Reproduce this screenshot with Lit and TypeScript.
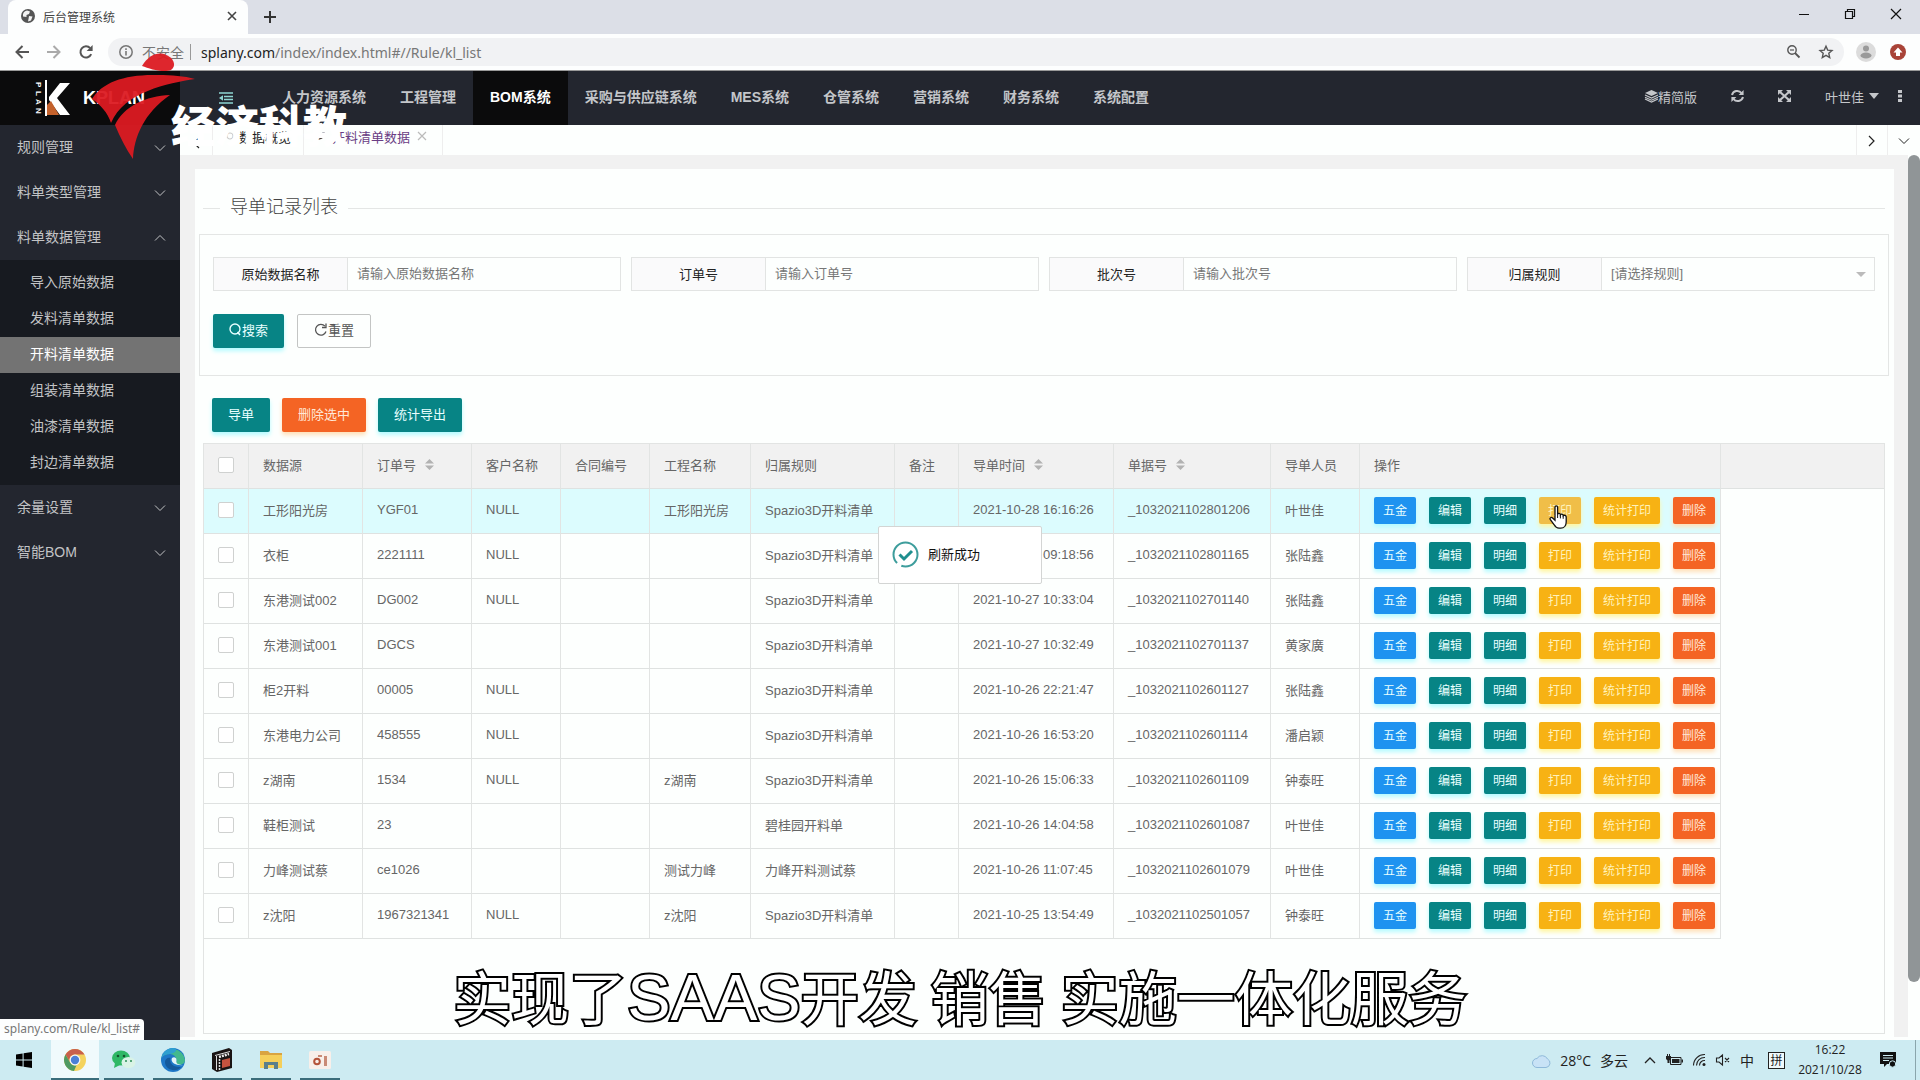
import { LitElement, html, svg, css, nothing } from "lit";
import { customElement, state } from "lit/decorators.js";
import { classMap } from "lit/directives/class-map.js";

interface Row {
  source: string;
  order: string;
  client: string;
  project: string;
  rule: string;
  time: string;
  bill: string;
  person: string;
}

const row = (
  source: string,
  order: string,
  client: string,
  project: string,
  rule: string,
  time: string,
  bill: string,
  person: string
): Row => ({ source, order, client, project, rule, time, bill, person });

const SPAZIO = "Spazio3D开料清单";

const ROWS: Row[] = [
  row("工形阳光房", "YGF01", "NULL", "工形阳光房", SPAZIO, "2021-10-28 16:16:26", "_1032021102801206", "叶世佳"),
  row("衣柜", "2221111", "NULL", "", SPAZIO, "2021-10-28 09:18:56", "_1032021102801165", "张陆鑫"),
  row("东港测试002", "DG002", "NULL", "", SPAZIO, "2021-10-27 10:33:04", "_1032021102701140", "张陆鑫"),
  row("东港测试001", "DGCS", "", "", SPAZIO, "2021-10-27 10:32:49", "_1032021102701137", "黄家廣"),
  row("柜2开料", "00005", "NULL", "", SPAZIO, "2021-10-26 22:21:47", "_1032021102601127", "张陆鑫"),
  row("东港电力公司", "458555", "NULL", "", SPAZIO, "2021-10-26 16:53:20", "_1032021102601114", "潘启颖"),
  row("z湖南", "1534", "NULL", "z湖南", SPAZIO, "2021-10-26 15:06:33", "_1032021102601109", "钟泰旺"),
  row("鞋柜测试", "23", "", "", "碧桂园开料单", "2021-10-26 14:04:58", "_1032021102601087", "叶世佳"),
  row("力峰测试蔡", "ce1026", "", "测试力峰", "力峰开料测试蔡", "2021-10-26 11:07:45", "_1032021102601079", "叶世佳"),
  row("z沈阳", "1967321341", "NULL", "z沈阳", SPAZIO, "2021-10-25 13:54:49", "_1032021102501057", "钟泰旺"),
];

const COLUMNS: { label: string; cls: string; sort?: boolean }[] = [
  { label: "数据源", cls: "c-source" },
  { label: "订单号", cls: "c-order", sort: true },
  { label: "客户名称", cls: "c-name" },
  { label: "合同编号", cls: "c-name" },
  { label: "工程名称", cls: "c-project" },
  { label: "归属规则", cls: "c-rule" },
  { label: "备注", cls: "c-note" },
  { label: "导单时间", cls: "c-time", sort: true },
  { label: "单据号", cls: "c-bill", sort: true },
  { label: "导单人员", cls: "c-name" },
  { label: "操作", cls: "c-ops" },
];

const OPS: [string, string][] = [
  ["五金", "blue"],
  ["编辑", "teal"],
  ["明细", "teal"],
  ["打印", "amber"],
  ["统计打印", "amber"],
  ["删除", "red"],
];

const NAV = ["人力资源系统", "工程管理", "BOM系统", "采购与供应链系统", "MES系统", "仓管系统", "营销系统", "财务系统", "系统配置"];

const SUBMENU = ["导入原始数据", "发料清单数据", "开料清单数据", "组装清单数据", "油漆清单数据", "封边清单数据"];

const FIELDS: [string, string, string][] = [
  ["f-source", "原始数据名称", "请输入原始数据名称"],
  ["f-order", "订单号", "请输入订单号"],
  ["f-batch", "批次号", "请输入批次号"],
];

const icon = (w: number, h: number, body: unknown) =>
  html`<svg width=${w} height=${h} viewBox="0 0 ${w} ${h}" fill="none" aria-hidden="true">${body}</svg>`;

const line = (d: string, width = 1) => svg`<path d=${d} stroke="currentColor" stroke-width=${width} />`;
const fill = (d: string, color = "currentColor") => svg`<path d=${d} fill=${color} />`;

const chevronDown = icon(12, 12, line("M1 3.5L6 8.5L11 3.5"));
const chevronUp = icon(12, 12, line("M1 8.5L6 3.5L11 8.5"));

@customElement("app-root")
export class AppRoot extends LitElement {
  @state() private checked = new Set<number>();

  static styles = css`
    :host {
      display: block;
      font-family: "Liberation Sans", "Noto Sans CJK SC", sans-serif;
      font-size: 13px;
      color: #666;
    }
    * { box-sizing: border-box; }
    svg { display: block; flex: none; overflow: visible; }
    a { color: inherit; text-decoration: none; }
    button { font: inherit; color: inherit; border: 0; background: none; padding: 0; margin: 0; }
    ul { list-style: none; margin: 0; padding: 0; }
    .screen { position: relative; display: flex; flex-direction: column; min-height: 100vh; background: #fff; }

    /* browser frame */
    .strip { display: flex; height: 34px; background: #dcdfe7; padding: 0 18px 0 8px; align-items: stretch; }
    .tab { width: 240px; background: #fdfefe; border-radius: 8px 8px 0 0; display: flex; align-items: center; gap: 8px; padding: 0 10px 2px 13px; font-size: 12px; color: #444; }
    .tab-title { flex: 1; }
    .new-tab { display: flex; align-items: center; padding: 0 16px 0; color: #333; }
    .win { margin-left: auto; display: flex; align-items: center; gap: 34px; padding-bottom: 6px; color: #111; }
    .bar { display: flex; align-items: center; height: 36px; padding: 0 14px 0 15px; background: #fdfefe; color: #555; }
    .bar-nav { display: flex; gap: 18px; padding-right: 15px; }
    .bar-nav .off { color: #aaa; }
    .omni { flex: 1; display: flex; align-items: center; height: 28px; border-radius: 14px; background: #f1f2f4; padding: 0 11px; font: 14px "Noto Sans", "Noto Sans CJK SC", sans-serif; color: #777; }
    .safe { padding: 0 6px 0 9px; }
    .omni-line { width: 1px; height: 16px; background: #999; margin-right: 10px; }
    .host { color: #222; }
    .omni-end { margin-left: auto; display: flex; gap: 19px; color: #555; }
    .bar-end { display: flex; gap: 14px; padding-left: 12px; align-items: center; }

    /* application header */
    .top { display: flex; height: 55px; background: #23262f; border-top: 1px solid #999; color: #c4c6ca; align-items: stretch; }
    .brand { width: 180px; background: #0b0b0c; display: flex; align-items: center; gap: 11px; padding-left: 34px; color: #fff; font-size: 18px; font-weight: bold; }
    .brand-mark { font: bold 8px "Liberation Sans", sans-serif; }
    .toggle { display: flex; align-items: center; padding: 0 32px 0 39px; color: #8fd6d3; }
    .nav { display: flex; font-size: 14px; font-weight: bold; }
    .nav a { display: flex; align-items: center; padding: 0 17px 4px; white-space: nowrap; }
    .nav .on { background: #0b0b0c; color: #fff; }
    .tools { margin-left: auto; display: flex; align-items: center; gap: 34px; padding: 0 18px 4px 0; }
    .tools button { display: flex; align-items: center; }
    .tools .user { gap: 5px; }
    .tools .more { margin-left: -15px; }

    /* sidebar */
    .body { flex: 1; display: flex; align-items: stretch; }
    .side { width: 180px; flex: none; background: #23262f; color: #c2c3c5; font-size: 14px; }
    .group { display: flex; width: 100%; height: 45px; align-items: center; justify-content: space-between; padding: 0 14px 4px 17px; }
    .group svg { margin-top: 4px; }
    .sub { background: #171a20; padding: 5px 0 4px; }
    .sub a { display: flex; height: 36px; align-items: center; padding: 0 0 4px 30px; }
    .sub .on { background: #737373; color: #fff; }

    /* page tabs */
    .main { flex: 1; min-width: 0; display: flex; flex-direction: column; }
    .tabs { display: flex; height: 30px; background: #fdfffe; color: #222; }
    .tabs > * { display: flex; align-items: center; border-right: 1px solid #eee; }
    .tabs .prev { width: 33px; justify-content: center; padding-top: 6px; }
    .tabs .page { padding: 0 12px 8px 13px; gap: 6px; }
    .tabs .current { color: #6a3d84; padding-right: 16px; }
    .tabs .current .x { margin-left: 2px; color: #bbb; }
    .tabs .next { width: 32px; justify-content: center; border-left: 1px solid #eee; margin-left: auto; padding-top: 2px; }
    .tabs .menu { width: 32px; justify-content: center; border: 0; padding-top: 2px; }

    .frame { flex: 1; display: flex; background: #fdfffe; }
    .content { flex: 1; min-width: 0; display: flex; background: #f1f1f1; padding: 14px 14px 0 15px; margin-bottom: 3px; }
    .card { flex: 1; min-width: 0; display: flex; flex-direction: column; background: #fdfffe; margin-bottom: -3px; padding: 24px 5px 6px 4px; }
    .scroll { width: 12px; padding-bottom: 58px; display: flex; }
    .thumb { flex: 1; background: #909597; border-radius: 6px; }

    .title { display: flex; align-items: center; gap: 10px; margin: 0 4px 12px; height: 30px; font-size: 18px; line-height: 26px; font-weight: 300; color: #444; }
    .title span { padding-bottom: 3px; }
    .title::before, .title::after { content: ""; height: 1px; background: #e4e6e5; width: 17px; }
    .title::after { flex: 1; }
    .panel { border: 1px solid #e4e6e5; padding: 22px 13px 27px; display: flex; flex-direction: column; gap: 23px; margin-top: -1px; }
    .fields { display: grid; grid-template-columns: repeat(4, 1fr); gap: 10px; }
    .field { display: flex; height: 34px; border: 1px solid #e2e4e3; }
    .field label { width: 134px; flex: none; display: flex; align-items: center; justify-content: center; padding-bottom: 2px; background: #fafafb; border-right: 1px solid #e2e4e3; color: #222; }
    .field input, .field select { flex: 1; min-width: 0; border: 0; outline: 0; background: transparent; font: inherit; padding: 0 9px 2px; color: #777; appearance: none; }
    .field input::placeholder { color: #777; opacity: 1; }
    .pick { flex: 1; min-width: 0; display: flex; align-items: center; padding-right: 8px; color: #bbb; }
    .pick select { height: 100%; }

    .row-btns { display: flex; gap: 13px; }
    .btn { display: flex; align-items: center; justify-content: center; height: 34px; padding: 0 16px 3px; border-radius: 2px; color: #e8ffff; white-space: nowrap; }
    .plain { border: 1px solid #c3c5c4; color: #555; }
    .teal { background: #078485; box-shadow: 0 3px 4px #b4fbff; }
    .red { background: #f46424; box-shadow: 0 3px 4px #ffe0b8; color: #ffe9d8; }
    .blue { background: #1e93f0; box-shadow: 0 3px 4px #b4fbff; }
    .amber { background: #f7b214; box-shadow: 0 3px 4px #fff6a0; color: #fff3bd; }
    .actions { display: flex; gap: 12px; padding: 22px 13px 11px; }

    /* table */
    .grid { flex: 1; margin: 0 4px; border: 1px solid #e2e4e3; }
    table { width: 100%; table-layout: fixed; border-collapse: separate; border-spacing: 0; }
    th, td { height: 45px; padding: 0 0 3px 14px; border-right: 1px solid #e2e4e3; border-bottom: 1px solid #dfe2e1; text-align: left; font-weight: normal; white-space: nowrap; }
    .cell-ops { padding-bottom: 1px; }
    th { background: #f1f1f1; }
    th:last-child { border-right: 0; }
    td:last-child { border: 0; background: #fdfffe; }
    .hover td { background: #dcfcfe; }
    .hover td:last-child { background: #fdfffe; }
    .c-check { width: 45px; }
    .c-source { width: 114px; }
    .c-order { width: 109px; }
    .c-name { width: 89px; }
    .c-project { width: 101px; }
    .c-rule { width: 144px; }
    .c-note { width: 64px; }
    .c-time { width: 155px; }
    .c-bill { width: 157px; }
    .c-ops { width: 361px; }
    .th { display: flex; align-items: center; gap: 9px; color: #b2b2b2; }
    .th span { color: #666; }
    input[type="checkbox"] { appearance: none; display: block; width: 16px; height: 16px; margin: 0; border: 1px solid #cfd1d0; border-radius: 2px; background: #fff; }
    input[type="checkbox"]:checked { background: #078485; }
    .ops { display: flex; gap: 13px; }
    .op { position: relative; height: 27px; padding: 0 9px 2px; border-radius: 2px; font-size: 12px; color: #e8ffff; }
    .op.amber { color: #fff3bd; }
    .op.red { color: #ffe9d8; }
    .op.over { background: #f0be48; }
    .hand { position: absolute; left: 10px; top: 8px; z-index: 2; }

    /* layers over the page */
    .toast { position: absolute; left: 50%; top: 526px; transform: translateX(-50%); width: 164px; height: 58px; display: flex; align-items: center; gap: 9px; padding: 0 0 2px 13px; background: #fff; border: 1px solid #d3d5d4; border-radius: 2px; color: #111; }
    .toast span { padding-bottom: 2px; }
    .caption { position: absolute; left: 0; right: 0; bottom: 37px; display: flex; justify-content: center; align-items: baseline; gap: 14px; margin: 0; font-size: 58px; line-height: 86px; color: #fff; white-space: nowrap; -webkit-text-stroke: 4px #000; paint-order: stroke fill; }
    .latin { font-size: 65px; }
    .station { position: absolute; left: 90px; top: 52px; }
    .station-name { position: absolute; left: 171px; top: 94px; font: 900 44px/60px "Noto Sans CJK SC", sans-serif; color: #fff; white-space: nowrap; }
    .status { position: absolute; left: 0; bottom: 40px; height: 21px; padding: 0 4px; background: #fdfefe; border-radius: 0 4px 0 0; font: 12px/20px "Noto Sans", sans-serif; color: #777; }

    /* desktop bar */
    .task { display: flex; height: 40px; background: #cdebf2; color: #222; font-family: "Open Sans", "Noto Sans CJK SC", sans-serif; font-size: 14px; }
    .apps { display: flex; gap: 9px; }
    .apps button { width: 40px; display: flex; align-items: center; justify-content: center; border-bottom: 2px solid #3b6d7b; padding-top: 2px; }
    .apps .start { width: 42px; border-color: transparent; padding-left: 6px; }
    .apps .live { width: 48px; background: #f0fafc; margin-right: -4px; }
    .tray { margin-left: auto; display: flex; align-items: center; padding-right: 4px; }
    .weather { display: flex; align-items: center; gap: 9px; padding-right: 16px; }
    .sys { display: flex; align-items: center; gap: 10px; }
    .ime { width: 17px; height: 17px; border: 1px solid #222; font-size: 12px; line-height: 15px; text-align: center; margin-left: 4px; background: #f0fafc; }
    .clock { width: 68px; margin: 0 16px 0 11px; font-size: 12px; line-height: 20px; text-align: center; }
    .edge { width: 1px; height: 40px; background: #8aa5ac; margin-left: 19px; }
  `;

  private toggle(i: number) {
    const next = new Set(this.checked);
    next.has(i) ? next.delete(i) : next.add(i);
    this.checked = next;
  }

  private browser() {
    return html`
      <div class="strip">
        <div class="tab">
          ${icon(14, 14, svg`<circle cx="7" cy="7" r="7" fill="#555" /><path d="M6 1.5L9 2.5L8 5L5.5 6L5.5 8L2 7.5C1.5 4 3 2 6 1.5ZM8 7L11.5 7.5L10 11.5L7 12.5L7.5 10Z" fill="#f3f3f3" />`)}
          <span class="tab-title">后台管理系统</span>
          <button aria-label="关闭标签页">${icon(12, 12, line("M2 2L10 10M10 2L2 10", 1.6))}</button>
        </div>
        <button class="new-tab" aria-label="新标签页">${icon(12, 12, line("M6 0V12M0 6H12", 2))}</button>
        <div class="win">
          <button aria-label="最小化">${icon(12, 12, line("M1 6.5H11"))}</button>
          <button aria-label="还原">${icon(12, 12, line("M1.5 3.5H8.5V10.5H1.5ZM3.5 3.5V1.5H10.5V8.5H8.5", 1.2))}</button>
          <button aria-label="关闭">${icon(12, 12, line("M1 1L11 11M11 1L1 11", 1.2))}</button>
        </div>
      </div>
      <div class="bar">
        <div class="bar-nav">
          <button aria-label="后退">${icon(14, 14, line("M14 7H2M7.5 1L1.5 7L7.5 13", 2))}</button>
          <button class="off" aria-label="前进">${icon(14, 14, line("M0 7H12M6.5 1L12.5 7L6.5 13", 2))}</button>
          <button aria-label="重新加载">${icon(14, 14, svg`${line("M12.2 9.2A5.6 5.6 0 1 1 11.2 3.2", 2)}${fill("M13.6 0V6H7.6Z")}`)}</button>
        </div>
        <div class="omni">
          ${icon(14, 14, svg`<circle cx="7" cy="7" r="6.2" stroke="currentColor" stroke-width="1.5" />${line("M7 6V10.5M7 3.3V4.9", 1.6)}`)}
          <span class="safe">不安全</span><span class="omni-line"></span>
          <span><span class="host">splany.com</span>/index/index.html#//Rule/kl_list</span>
          <span class="omni-end">
            ${icon(13, 13, svg`<circle cx="5" cy="5" r="4.2" stroke="currentColor" stroke-width="1.4" />${line("M8 8L12.5 12.5", 1.8)}${line("M3 5H7", 1.2)}`)}
            ${icon(14, 14, line("M7 1.2L8.7 5.1L13 5.5L9.8 8.3L10.7 12.6L7 10.3L3.3 12.6L4.2 8.3L1 5.5L5.3 5.1Z", 1.4))}
          </span>
        </div>
        <div class="bar-end">
          ${icon(20, 20, svg`<circle cx="10" cy="10" r="10" fill="#dcdcdc" /><circle cx="10" cy="6.5" r="3" fill="#9a9a9a" /><ellipse cx="10" cy="13.5" rx="5.5" ry="3" fill="#9a9a9a" />`)}
          ${icon(16, 16, svg`<circle cx="8" cy="8" r="8" fill="#a94338" />${fill("M8 3.5L12.5 8.5H10V12H6V8.5H3.5Z", "#fff")}`)}
        </div>
      </div>`;
  }

  private header() {
    return html`
      <header class="top">
        <div class="brand">
          <svg class="brand-mark" width="38" height="38" viewBox="0 0 38 38" aria-hidden="true">
            <text transform="translate(2 3) rotate(90)" x="0" y="0" fill="#fff">P</text>
            <text transform="translate(2 12) rotate(90)" x="0" y="0" fill="#fff">L</text>
            <text transform="translate(2 20) rotate(90)" x="0" y="0" fill="#fff">A</text>
            <text transform="translate(2 29) rotate(90)" x="0" y="0" fill="#fff">N</text>
            <path d="M11 1H13V37H11Z" fill="#fff" />
            <path d="M26 4H36L23 19L36 36H26L15 21L15 18Z" fill="#fff" />
            <path d="M13 36V26L17 22L25 36Z" fill="#c4622c" />
          </svg>
          <span>KPLAN</span>
        </div>
        <button class="toggle" aria-label="侧边伸缩">
          ${icon(14, 12, svg`${line("M0 1H14M5 4.5H14M5 7.5H14M0 11H14", 1.6)}${fill("M0 6L4 3.3V8.7Z")}`)}
        </button>
        <nav class="nav">
          ${NAV.map((n) => html`<a href="#" class=${classMap({ on: n === "BOM系统" })}>${n}</a>`)}
        </nav>
        <div class="tools">
          <button>
            ${icon(13, 12, svg`${fill("M6.5 0L13 3L6.5 6L0 3Z")}${line("M0 5L6.5 8L13 5M0 7.2L6.5 10.2L13 7.2M0 9L6.5 12L13 9", 1.2)}`)}
            精简版
          </button>
          <button aria-label="刷新">
            ${icon(13, 12, svg`${line("M1 5A5.4 5.4 0 0 1 10.5 3M12 7A5.4 5.4 0 0 1 2.5 9", 2)}${fill("M12.6 0V5H7.6ZM.4 12V7H5.4Z")}`)}
          </button>
          <button aria-label="全屏">
            ${icon(13, 12, svg`${line("M2 2L11 10M11 2L2 10", 2.2)}${fill("M0 0H5L0 5ZM13 0V5L8 0ZM0 12V7L5 12ZM13 12H8L13 7Z")}`)}
          </button>
          <button class="user">叶世佳 ${icon(10, 6, fill("M0 0H10L5 6Z"))}</button>
          <button class="more" aria-label="更多">${icon(4, 12, fill("M0 0H4V3H0ZM0 4.5H4V7.5H0ZM0 9H4V12H0Z"))}</button>
        </div>
      </header>`;
  }

  private sidebar() {
    const group = (name: string, open = false) =>
      html`<button class="group" aria-expanded=${open}>${name}${open ? chevronUp : chevronDown}</button>`;
    return html`
      <aside class="side">
        ${group("规则管理")}${group("料单类型管理")}${group("料单数据管理", true)}
        <ul class="sub">
          ${SUBMENU.map((s) => html`<li><a href="#" class=${classMap({ on: s === "开料清单数据" })}>${s}</a></li>`)}
        </ul>
        ${group("余量设置")}${group("智能BOM")}
      </aside>`;
  }

  private search() {
    return html`
      <form class="panel" @submit=${(e: Event) => e.preventDefault()}>
        <div class="fields">
          ${FIELDS.map(
            ([id, label, hint]) => html`
              <div class="field"><label for=${id}>${label}</label><input id=${id} type="text" placeholder=${hint} /></div>`
          )}
          <div class="field">
            <label for="f-rule">归属规则</label>
            <div class="pick">
              <select id="f-rule"><option>[请选择规则]</option></select>
              ${icon(10, 5, fill("M0 0H10L5 5Z"))}
            </div>
          </div>
        </div>
        <div class="row-btns">
          <button class="btn teal">
            ${icon(13, 13, svg`<circle cx="6" cy="6" r="5" stroke="currentColor" stroke-width="1.4" />${line("M8.5 9L11 12", 1.6)}`)}搜索
          </button>
          <button class="btn plain" type="reset">
            ${icon(14, 13, svg`${line("M12 8.5A5.4 5.4 0 1 1 11 3.2", 1.3)}${line("M12 .5V4.5H8", 1.3)}`)}重置
          </button>
        </div>
      </form>`;
  }

  private hand() {
    return html`<svg class="hand" width="19" height="24" viewBox="0 0 19 24" aria-hidden="true">
      <path d="M6 2.2C6 .4 8.6 .4 8.6 2.2V9.3C9.2 7.9 11.3 8.2 11.4 9.8C12.2 8.6 14 9.1 14.2 10.6C15.4 9.8 17.2 10.4 17.2 12V17C17.2 20.5 15 23.2 11.8 23.2H10C7.6 23.2 6.2 21.6 5.2 19.8L1.2 14.4C.4 12.9 2.3 11.8 3.6 13L6 15.2Z" fill="#fff" stroke="#111" stroke-width="1.3" />
      <path d="M8.6 9V13M11.4 10V13.4M14.2 11V13.8" stroke="#111" stroke-width="1" />
    </svg>`;
  }

  private table() {
    return html`
      <div class="grid">
        <table>
          <colgroup>
            <col class="c-check" />
            ${COLUMNS.map((c) => html`<col class=${c.cls} />`)}
            <col />
          </colgroup>
          <thead>
            <tr>
              <th><input type="checkbox" aria-label="全选" /></th>
              ${COLUMNS.map(
                (c) => html`<th>
                  <div class="th"><span>${c.label}</span>${c.sort ? icon(9, 11, fill("M4.5 0L9 4.5H0ZM4.5 11L0 6.5H9Z")) : nothing}</div>
                </th>`
              )}
              <th></th>
            </tr>
          </thead>
          <tbody>
            ${ROWS.map(
              (r, i) => html`<tr class=${classMap({ hover: i === 0 })}>
                <td><input type="checkbox" aria-label=${r.source} .checked=${this.checked.has(i)} @change=${() => this.toggle(i)} /></td>
                <td>${r.source}</td>
                <td>${r.order}</td>
                <td>${r.client}</td>
                <td></td>
                <td>${r.project}</td>
                <td>${r.rule}</td>
                <td></td>
                <td>${r.time}</td>
                <td>${r.bill}</td>
                <td>${r.person}</td>
                <td class="cell-ops">
                  <div class="ops">
                    ${OPS.map(([label, tone], k) => {
                      const over = i === 0 && k === 3;
                      return html`<button class="op ${tone} ${over ? "over" : ""}">${label}${over ? this.hand() : nothing}</button>`;
                    })}
                  </div>
                </td>
                <td></td>
              </tr>`
            )}
          </tbody>
        </table>
      </div>`;
  }

  private taskbar() {
    return html`
      <footer class="task">
        <div class="apps">
          <button class="start" aria-label="开始">${icon(16, 16, fill("M0 2.4L6.6 1.5V7.5H0ZM7.6 1.3L16 0V7.5H7.6ZM0 8.5H6.6V14.5L0 13.6ZM7.6 8.5H16V16L7.6 14.7Z", "#000"))}</button>
          <button class="live" aria-label="Chrome">
            ${icon(24, 24, svg`<circle cx="12" cy="12" r="11" fill="#f4d35e" /><path d="M2.5 6.5A11 11 0 0 1 21.5 6.5H12A5.5 5.5 0 0 0 7 14.5Z" fill="#c8604c" /><path d="M2.5 6.5L7.2 14.7A5.5 5.5 0 0 0 13.5 17.3L11 23A11 11 0 0 1 2.5 6.5Z" fill="#4f9a62" /><circle cx="12" cy="12" r="5.4" fill="#f4f7f9" /><circle cx="12" cy="12" r="4.2" fill="#4b7fd6" />`)}
          </button>
          <button aria-label="微信">
            ${icon(24, 20, svg`<ellipse cx="9" cy="8" rx="9" ry="7.5" fill="#2fb866" />${fill("M3 13L2 18L8 15Z", "#2fb866")}<circle cx="6" cy="6" r="1.3" fill="#14532d" /><circle cx="12" cy="6" r="1.3" fill="#14532d" /><ellipse cx="16.5" cy="12.5" rx="7" ry="5.6" fill="#d9f3e6" /><circle cx="14" cy="11" r="1" fill="#2b8f57" /><circle cx="19" cy="11" r="1" fill="#2b8f57" />`)}
          </button>
          <button aria-label="Edge">
            ${icon(24, 24, svg`<circle cx="12" cy="12" r="12" fill="#1f78c8" /><path d="M.5 10A12 12 0 0 1 24 12C24 16 20 17.5 16 16.5C14 16 15.5 14 15.5 12A6.5 6.5 0 0 0 9 6C5 6 2 7.5 .5 10Z" fill="#43b98d" /><path d="M.5 10A12 12 0 0 1 14 .2C17 2 14 5 9 6C5 6 2 7.5 .5 10Z" fill="#2f9fd0" /><path d="M9.5 10C8 14 11 19.5 20 19C15 25 4 22 4 14C4 11 7 9 9.5 10Z" fill="#155a9c" /><path d="M15.5 12C15.5 9.5 13 8.5 11 10C9.5 13 12 17.5 22 17.2C14 16.5 15.5 14 15.5 12Z" fill="#e2f4f8" />`)}
          </button>
          <button aria-label="影视">
            ${icon(20, 24, svg`${fill("M0 5L17 0L20 2V20L5 24L0 21Z", "#1a1414")}<path d="M3 7.5L18 3.5M4.5 8V22" stroke="#ddd" stroke-width="1" /><path d="M7 9L17 6" stroke="#eee" stroke-width="2.5" stroke-dasharray="2 1" />${fill("M10 12L18 10V18L10 20Z", "#c4533f")}<path d="M7.5 11V22" stroke="#ddd" stroke-width="1.5" stroke-dasharray="2 1" />`)}
          </button>
          <button aria-label="文件资源管理器">
            ${icon(22, 18, svg`${fill("M0 0H8L10 2H22V17H0Z", "#d9a441")}${fill("M0 4H22V17H0Z", "#f5cf5a")}${fill("M4 18V11H18V18H14V14H8V18Z", "#5b7f8c")}`)}
          </button>
          <button aria-label="录屏">
            ${icon(22, 18, svg`<rect width="22" height="18" rx="1.5" fill="#f8efea" /><circle cx="8" cy="10.5" r="2.8" stroke="#b4533a" stroke-width="2" /><rect x="15" y="5" width="3" height="10" fill="#c98a76" /><rect x="9" y="4" width="4" height="2" fill="#c98a76" />`)}
          </button>
        </div>
        <div class="tray">
          <div class="weather">
            ${icon(19, 15, svg`<path d="M5 14.5H14A4.5 4.5 0 0 0 15.5 6A6 6 0 0 0 5 5.5A4.5 4.5 0 0 0 5 14.5Z" fill="#c8e2f6" stroke="#8fb9da" />`)}
            <span>28°C</span><span>多云</span>
          </div>
          <div class="sys">
            ${icon(12, 8, line("M1 7L6 2L11 7", 1.3))}
            ${icon(17, 12, svg`${line("M4.5 3.5H15V10.5H4.5Z", 1)}${fill("M6 5H13.5V9H6ZM15.5 5.5H17V8.5H15.5ZM0 2H5V5L3.5 6.5V9H1.5V6.5L0 5ZM1 0H2V2H1ZM3 0H4V2H3Z")}`)}
            ${icon(13, 12, svg`${line("M.5 11.5A11 11 0 0 1 12 .5M3.5 11.5A8 8 0 0 1 12 3.5M6.5 11.5A5 5 0 0 1 12 6.5", 1.1)}<circle cx="11" cy="10.5" r="1.5" fill="currentColor" />`)}
            ${icon(14, 12, line("M.5 4H3L6.5 1V11L3 8H.5ZM9 4L13 8M13 4L9 8", 1.1))}
            <span>中</span>
            <span class="ime">拼</span>
          </div>
          <div class="clock">16:22<br />2021/10/28</div>
          ${icon(16, 16, svg`${fill("M0 0H16V12H7L4 15V12H0Z", "#111")}<path d="M3 3.5H13M3 6H13M3 8.5H9" stroke="#cdebf2" /><circle cx="12.5" cy="12" r="3.2" fill="#111" stroke="#cdebf2" />`)}
          <span class="edge"></span>
        </div>
      </footer>`;
  }

  render() {
    return html`
      <div class="screen">
        ${this.browser()} ${this.header()}
        <div class="body">
          ${this.sidebar()}
          <main class="main">
            <div class="tabs">
              <button class="prev" aria-label="向左">${icon(8, 10, line("M7 0L2 5L7 10", 1.2))}</button>
              <a class="page" href="#">${icon(7, 8, svg`<circle cx="4" cy="4" r="3" stroke="#ccc" stroke-width="1.2" />`)}<span>数据概览</span></a>
              <a class="page current" href="#">
                ${icon(9, 8, fill("M8 0C8 5 5 8 0 7.5C3 6.5 5 4 5.5 0Z", "#222"))}<span>开料清单数据</span>
                <span class="x">${icon(8, 8, line("M0 0L8 8M8 0L0 8", 1.2))}</span>
              </a>
              <button class="next" aria-label="向右">${icon(8, 10, line("M1 0L6 5L1 10", 1.2))}</button>
              <button class="menu" aria-label="标签菜单">${chevronDown}</button>
            </div>
            <div class="frame">
              <div class="content">
                <section class="card">
                  <h1 class="title"><span>导单记录列表</span></h1>
                  ${this.search()}
                  <div class="actions">
                    <button class="btn teal">导单</button>
                    <button class="btn red">删除选中</button>
                    <button class="btn teal">统计导出</button>
                  </div>
                  ${this.table()}
                </section>
              </div>
              <div class="scroll"><div class="thumb"></div></div>
            </div>
          </main>
        </div>
        ${this.taskbar()}
        <div class="toast" role="status">
          ${icon(27, 27, svg`<circle cx="13.5" cy="13.5" r="12" stroke="#3d9d9c" stroke-width="2" stroke-dasharray="70 5" stroke-dashoffset="-28" /><path d="M7.5 13.5L12 18L20 10" stroke="#1f8f8f" stroke-width="3" />`)}
          <span>刷新成功</span>
        </div>
        <p class="caption">
          <span>实现了<span class="latin">SAAS</span>开发</span><span>销售</span><span>实施一体化服务</span>
        </p>
        <svg class="station" width="106" height="108" viewBox="90 52 106 108" aria-hidden="true">
          <g fill="#dc1a22" fill-opacity=".95">
            <path d="M142 66C148 56 156 52 164 54C174 57 177 66 171 70C163 73 150 69 142 66Z" />
            <path d="M92 99C102 82 126 74 158 75C172 75 184 76 195 79C168 83 124 92 111 123C108 113 100 104 92 99Z" />
            <path d="M170 95C146 96 124 106 115 125C120 137 126 149 133 159C134 137 144 113 170 95Z" />
          </g>
        </svg>
        <span class="station-name">经济科教</span>
        <span class="status">splany.com/Rule/kl_list#</span>
      </div>`;
  }
}
